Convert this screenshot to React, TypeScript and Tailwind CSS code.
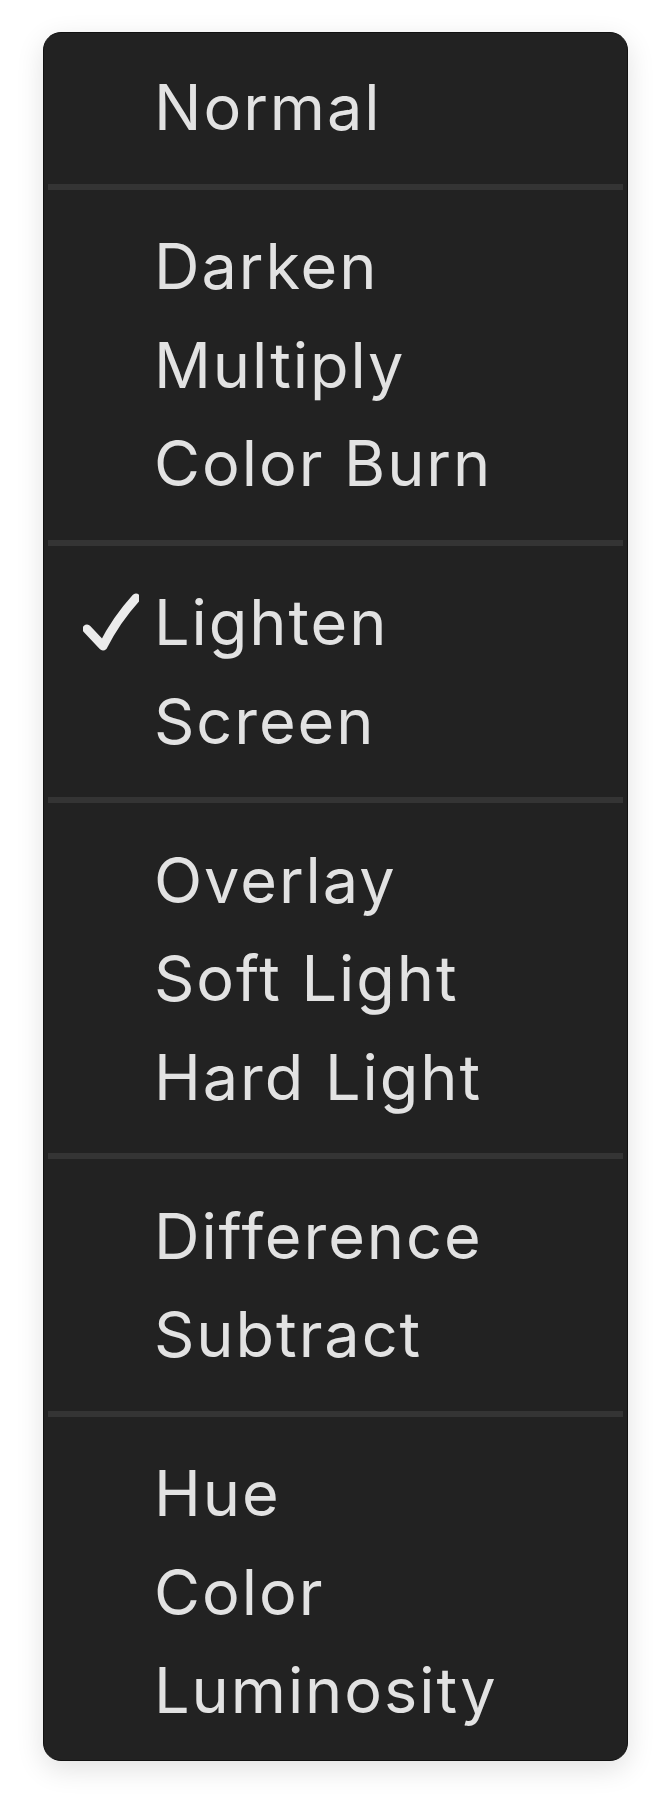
const groups: string[][] = [
  ["Normal"],
  ["Darken", "Multiply", "Color Burn"],
  ["Lighten", "Screen"],
  ["Overlay", "Soft Light", "Hard Light"],
  ["Difference", "Subtract"],
  ["Hue", "Color", "Luminosity"],
];

const selected = "Lighten";

function Check() {
  return (
    <svg viewBox="0 0 56 58" className="w-[56px] h-[58px] ml-[39px]" fill="none">
      <path
        d="M4 36 L20 53 Q33 27 53 5"
        stroke="#ececec"
        strokeWidth="9"
        strokeLinecap="round"
        strokeLinejoin="round"
      />
    </svg>
  );
}

function MenuItem({ label }: { label: string }) {
  return (
    <div className="flex items-center h-[98.5px]">
      <div className="w-[110px] shrink-0 flex items-center">
        {label === selected && <Check />}
      </div>
      <span className="text-[63px] leading-[98.5px] text-[#e2e2e2] tracking-[1.95px]">{label}</span>
    </div>
  );
}

export default function App() {
  return (
    <div
      className="min-h-screen bg-white pt-[32px] pl-[43px]"
      style={{ fontFamily: "Inter, 'Liberation Sans', sans-serif" }}
    >
      <div className="w-[585px] rounded-[18px] bg-[#222222] border border-[#111] pt-[25px] pb-[20px] shadow-[0_8px_28px_rgba(0,0,0,0.12)]">
        {groups.map((group, i) => (
          <div key={i}>
            {i > 0 && (
              <div className="h-[60.5px] flex items-center px-[4px]">
                <div className="h-[6px] w-full bg-[#343434] blur-[0.6px]" />
              </div>
            )}
            {group.map((label) => (
              <MenuItem key={label} label={label} />
            ))}
          </div>
        ))}
      </div>
    </div>
  );
}
